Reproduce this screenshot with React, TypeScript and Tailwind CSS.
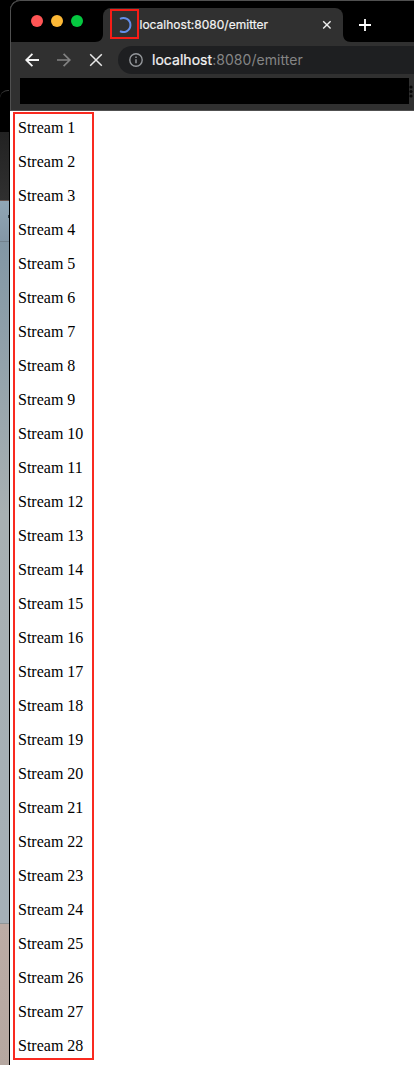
import React from "react";

const streams = Array.from({ length: 28 }, (_, i) => i + 1);

function Backdrop() {
  return (
    <div className="relative flex w-[10px] shrink-0 flex-col border-r border-black bg-black">
      <div className="h-[90px] bg-black" />
      <div className="h-[42px] rounded-tl-[8px] border-t border-[#3a3a3a] bg-black" />
      <div className="h-[68px] bg-linear-to-b from-[#222222] to-[#303030]" />
      <div className="h-px bg-[#65534d]" />
      <div className="h-[40px] bg-linear-to-b from-[#91a6b5] to-[#8397a6]" />
      <div className="h-px bg-[#71818d]" />
      <div className="h-[681px] bg-linear-to-b from-[#8297a5] via-[#a8b0b2] via-40% to-[#a5b0b7]" />
      <div className="h-px bg-[#8f9698]" />
      <div className="flex-1 bg-linear-to-b from-[#bcaca5] to-[#b5a7a0]" />
      <span className="absolute right-0 top-[215px] h-[3px] w-px bg-[#34424c]" />
    </div>
  );
}

function Tab() {
  return (
    <div className="relative mt-[7px] flex h-[34px] w-[240px] shrink-0 items-center rounded-t-[8px] bg-[#303030]">
      <svg className="absolute -left-[8px] bottom-0" width="8" height="8" viewBox="0 0 8 8">
        <path d="M8 0v8H0C5 8 8 5 8 0Z" fill="#303030" />
      </svg>
      <svg className="absolute -right-[8px] bottom-0" width="8" height="8" viewBox="0 0 8 8">
        <path d="M0 0v8h8C3 8 0 5 0 0Z" fill="#303030" />
      </svg>
      <div className="ml-[7px] mt-[-2px] flex h-[30px] w-[29px] shrink-0 items-center justify-center border-2 border-[#f71d16]">
        <svg className="shrink-0" width="18" height="18" viewBox="0 0 18 18" fill="none">
          <path d="M4 3.9A7 7 0 1 1 4 16.1" stroke="#638de8" strokeWidth="2" />
        </svg>
      </div>
      <span className="w-[129px] shrink-0 whitespace-nowrap pl-[0.5px] font-['Inter',sans-serif] text-[12px] leading-[16px] tracking-[0.01px] text-[#f3f3f3] [-webkit-text-stroke:0.2px_#f3f3f3]">
        localhost:8080/emitter
      </span>
      <svg className="ml-[54px] shrink-0" width="10" height="10" viewBox="0 0 10 10" fill="none">
        <path d="m1.2 1.2 7.4 7.4M8.6 1.2 1.2 8.6" stroke="#eeeeee" strokeWidth="1.4" />
      </svg>
    </div>
  );
}

function TitleBar() {
  return (
    <div className="flex h-[42px] rounded-tl-[10px] border-l border-t border-[#505050] bg-black">
      <div className="flex w-[92px] shrink-0 gap-[8px] pl-[20px] pt-[14px]">
        <span className="size-[12px] rounded-full bg-[#ff5555]" />
        <span className="size-[12px] rounded-full bg-[#fdb936]" />
        <span className="size-[12px] rounded-full bg-[#05c840]" />
      </div>
      <Tab />
      <svg className="ml-[16px] mt-[18px]" width="12" height="12" viewBox="0 0 12 12" fill="none">
        <path d="M6 0v12M0 6h12" stroke="#ffffff" strokeWidth="1.8" />
      </svg>
    </div>
  );
}

function Toolbar() {
  return (
    <div className="h-[69px] border-b border-l border-[#505050] bg-[#303030] pt-[4px]">
      <div className="flex h-[28px] items-center pl-[14px]">
        <svg width="14" height="14" viewBox="0 0 14 14" fill="none" stroke="#f5f5f5" strokeWidth="1.8">
          <path d="M14 7H1.5M7.4.8 1.2 7l6.2 6.2" />
        </svg>
        <svg className="ml-[18px]" width="14" height="14" viewBox="0 0 14 14" fill="none" stroke="#828282" strokeWidth="1.7">
          <path d="M0 7h12.5M6.6.8 12.8 7l-6.2 6.2" />
        </svg>
        <svg className="ml-[18px]" width="14" height="14" viewBox="0 0 14 14" fill="none" stroke="#e9e9e9" strokeWidth="1.5">
          <path d="m1.2 1.2 11.6 11.6M12.8 1.2 1.2 12.8" />
        </svg>
        <div className="ml-[15px] flex h-[28px] flex-1 items-center rounded-l-full bg-[#1e1f21]">
          <svg className="ml-[11px]" width="14" height="14" viewBox="0 0 14 14" fill="none" stroke="#94979b">
            <circle cx="7" cy="7" r="6.2" strokeWidth="1.4" />
            <path d="M7 6.2v4M7 3.4V5" strokeWidth="1.5" />
          </svg>
          <span className="ml-[9px] whitespace-nowrap font-['Inter',sans-serif] text-[14px] leading-[20px] tracking-[0.04px] text-[#858585]">
            <span className="text-[#f4f4f4] [-webkit-text-stroke:0.2px_#f4f4f4]">localhost</span>:8080/emitter
          </span>
        </div>
      </div>
      <div className="mt-[4px] flex items-center pl-[9px]">
        <div className="h-[26px] w-[389px] shrink-0 bg-black" />
        <svg className="shrink-0" width="5" height="13" viewBox="0 0 5 13" fill="#080808">
          <circle cx="2" cy="2" r="1.6" />
          <circle cx="2" cy="6.5" r="1.6" />
          <circle cx="2" cy="11" r="1.6" />
        </svg>
      </div>
    </div>
  );
}

export default function App() {
  return (
    <div className="flex h-[1065px] w-[414px] overflow-hidden bg-black">
      <Backdrop />
      <div className="flex min-w-0 flex-1 flex-col overflow-hidden rounded-tl-[10px] bg-white">
        <header className="bg-black">
          <TitleBar />
          <Toolbar />
        </header>
        <main className="flex-1 bg-white pl-[3px] pt-px">
          <ul className="flex h-[948px] w-[81px] flex-col gap-[16px] border-2 border-[#f92a20] pl-[3px] pt-[5px]">
            {streams.map((n) => (
              <li
                key={n}
                className="h-[18px] whitespace-nowrap font-['Liberation_Serif',serif] text-[16px] leading-[18px] text-black"
              >
                Stream {n}
              </li>
            ))}
          </ul>
        </main>
      </div>
    </div>
  );
}
